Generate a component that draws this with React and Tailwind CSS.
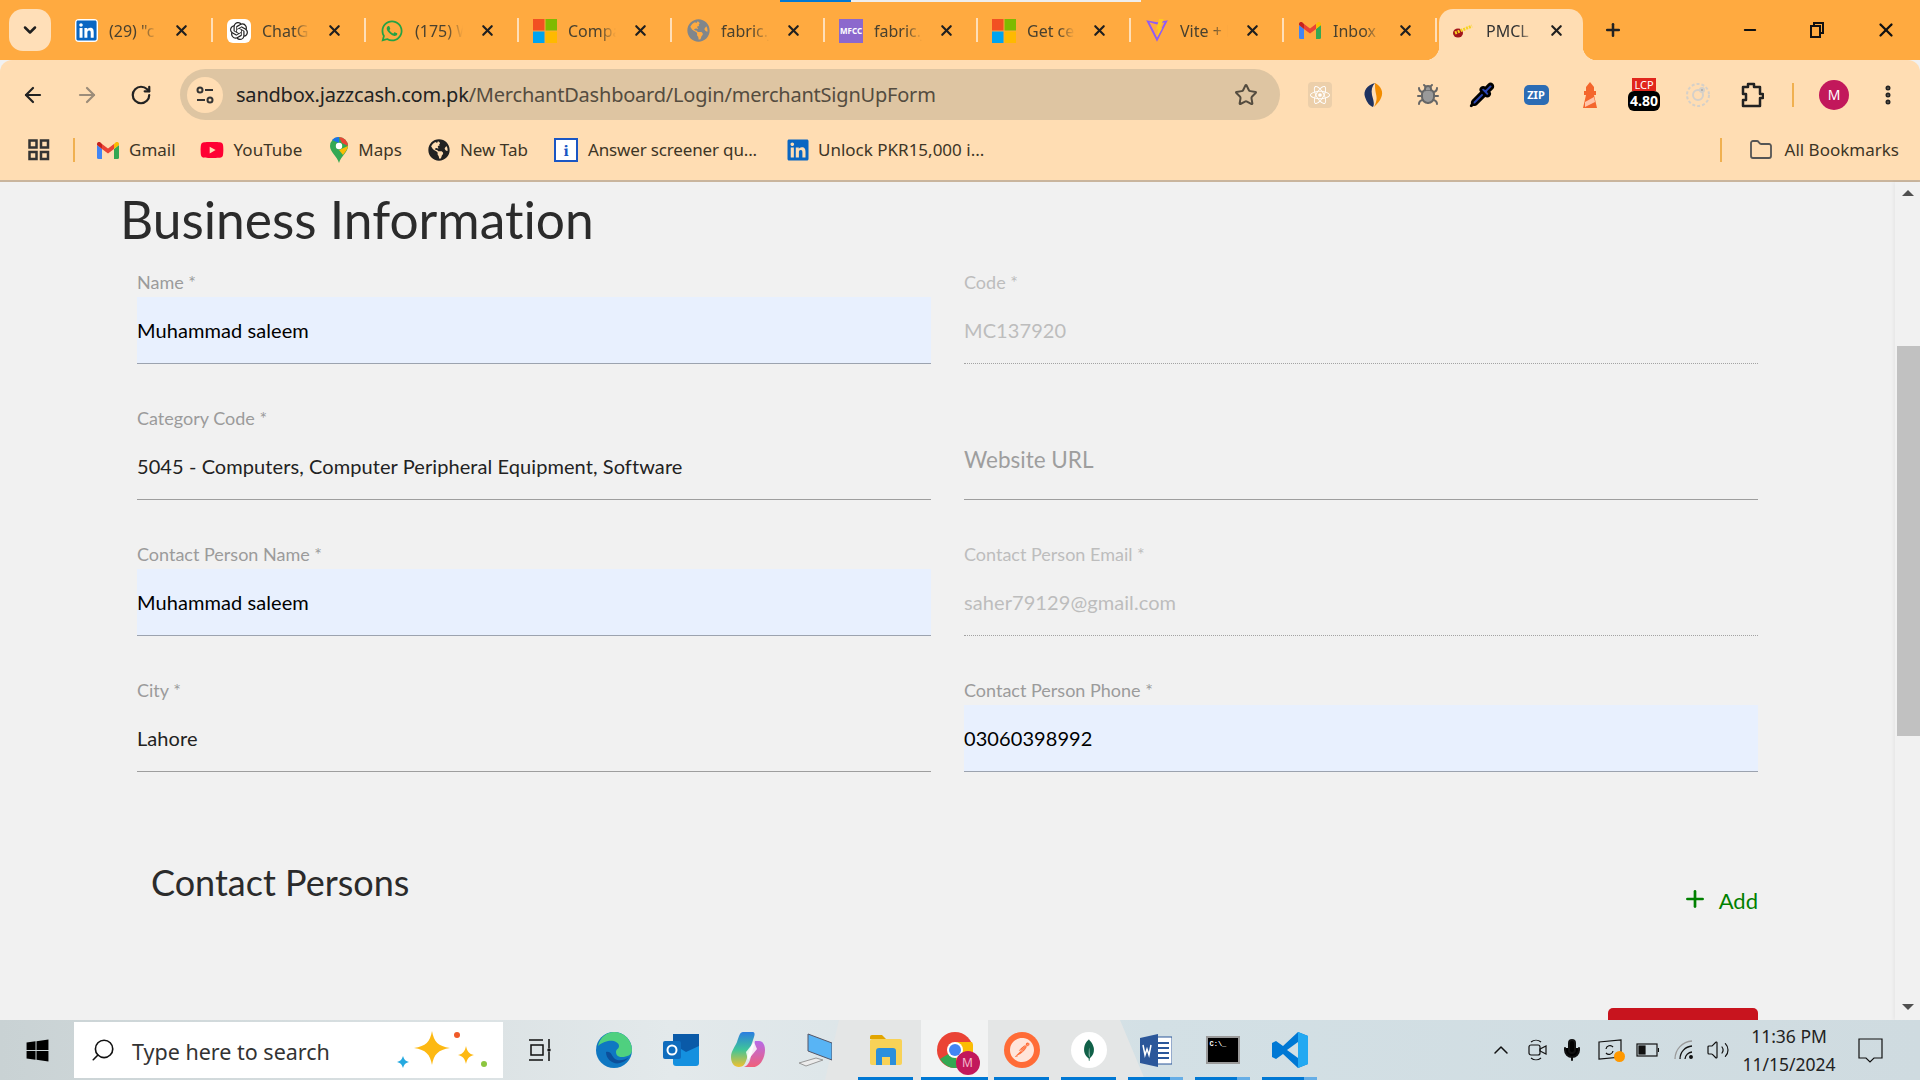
import React from 'react';
import { ArrowLeft, ArrowRight, RotateCw, Star, X, Plus, Minus, ChevronDown, ChevronUp, Search, Folder, EllipsisVertical, Mic, Volume2, Pipette, Bug } from 'lucide-react';
import { FaLinkedin, FaWhatsapp, FaGlobeAmericas, FaYoutube, FaWindows } from 'react-icons/fa';
import { SiOpenai, SiPostman, SiMongodb, SiReact } from 'react-icons/si';

const Ms = ({ size = 24 }) => (
  <svg width={size} height={size} viewBox="0 0 24 24">
    <rect x="0" y="0" width="11.5" height="11.5" fill="#f25022" />
    <rect x="12.5" y="0" width="11.5" height="11.5" fill="#7fba00" />
    <rect x="0" y="12.5" width="11.5" height="11.5" fill="#00a4ef" />
    <rect x="12.5" y="12.5" width="11.5" height="11.5" fill="#ffb900" />
  </svg>
);

const GmailIcon = () => (
  <svg width="22" height="17" viewBox="0 0 22 17">
    <path d="M0 3v12.5A1.5 1.5 0 0 0 1.5 17H5V7z" fill="#4285f4" />
    <path d="M22 3v12.5a1.5 1.5 0 0 1-1.5 1.5H17V7z" fill="#34a853" />
    <path d="M17 2v5l5-4V2c0-2-2.300-2.600-3.500-1.600z" fill="#fbbc04" />
    <path d="M5 7V2L11 6.500 17 2v5l-6 4.500z" fill="#ea4335" />
    <path d="M0 2v1l5 4V2L3.500.4C2.300-.6 0 0 0 2z" fill="#c5221f" />
  </svg>
);

const ViteIcon = () => (
  <svg width="24" height="26" viewBox="0 0 22 24">
    <path d="M1 2l10 20L21 2l-10 2z" fill="#8f5cf6" />
    <path d="M4 4l7 14 7-14-7 2z" fill="#ffaa40" />
    <path d="M13 1l4 0-3 9 2-1-5 9 1-8-2 1z" fill="#fdc921" />
  </svg>
);

const PmclIcon = () => (
  <svg width="22" height="16" viewBox="0 0 22 16">
    <ellipse cx="6" cy="10" rx="5" ry="4.500" fill="#a3161c" />
    <path d="M3 10L20 3" stroke="#f6d21f" strokeWidth="3" strokeDasharray="2 1" />
  </svg>
);

const tabs = [
  { label: '(29) "c', icon: <FaLinkedin size={23} color="#0a66c2" className="bg-white rounded-sm" /> },
  { label: 'ChatGPT', icon: <span className="flex h-6 w-6 items-center justify-center rounded-md bg-white"><SiOpenai size={18} color="#222" /></span> },
  { label: '(175) WhatsApp', icon: <FaWhatsapp size={24} color="#25a244" /> },
  { label: 'Compare', icon: <Ms /> },
  { label: 'fabric.js', icon: <FaGlobeAmericas size={23} color="#80868b" /> },
  { label: 'fabric.js', icon: <span className="flex h-6 w-6 items-center justify-center bg-[#8c68cd] text-[8px] font-bold text-white">MFCC</span> },
  { label: 'Get certified', icon: <Ms /> },
  { label: 'Vite + React', icon: <ViteIcon /> },
  { label: 'Inbox (12)', icon: <GmailIcon /> },
];

const Tab = ({ label, icon }) => (
  <div className="relative flex h-[51px] w-[153px] shrink-0 items-center pb-[8px] pl-[15px]">
    <span className="flex w-6 justify-center">{icon}</span>
    <span className="ml-[11px] w-[48px] overflow-hidden whitespace-nowrap text-[16px] text-[#49412f] [mask-image:linear-gradient(to_right,black_65%,transparent)]">{label}</span>
    <X size={17} strokeWidth={3} className="ml-[16px] text-[#1f1f1f]" />
    <span className="absolute right-[-1px] top-[9px] h-[24px] w-[2px] bg-[#ffdfb8]" />
  </div>
);

const Field = ({ label, value, filled, disabled, placeholder }) => (
  <div className="flex h-[136px] flex-col">
    <label className={`h-[28px] text-[18px] leading-[26px] ${disabled ? 'text-[#bdbdbd]' : 'text-[#9b9b9b]'}`}>{label}</label>
    <div className={`flex h-[67px] items-center border-b-[1.5px] ${disabled ? 'border-dotted border-[#a3a3a3]' : filled ? 'border-[#9ca3af]' : 'border-[#9e9e9e]'} ${filled ? 'bg-[#e8f0fe] text-black' : 'text-[#222]'}`}>
      {placeholder ? (
        <span className="relative top-[-6px] text-[22.500px] text-[#9e9e9e]">{placeholder}</span>
      ) : (
        <span className={`text-[20px] tracking-[0.08px] ${disabled ? 'text-[#bdbdbd]' : ''}`}>{value}</span>
      )}
    </div>
  </div>
);

const Bookmark = ({ icon, label, className }) => (
  <div className={`flex items-center text-[17px] text-[#3d3526] ${className}`}>
    {icon}
    <span>{label}</span>
  </div>
);

const Ext = ({ children }) => (
  <div className="flex w-[54px] shrink-0 items-center justify-center">{children}</div>
);

const TaskIcon = ({ children, bar, partial, active, className = '' }) => (
  <div className={`relative flex h-full w-[67px] items-center justify-center ${active ? 'bg-white/50' : ''} ${className}`}>
    {children}
    {bar && (
      <span className={`absolute bottom-0 flex h-[3px] bg-[#0078d4] ${active ? 'left-0 right-0' : 'left-[6px] right-[6px]'}`}>
        {partial && <span className="ml-auto h-full w-[13px] bg-[#66aee6]" />}
      </span>
    )}
  </div>
);

export default function App() {
  return (
    <div className="flex h-screen w-screen flex-col overflow-hidden bg-[#f1f1f1] font-['Noto_Sans',sans-serif]">
      {/* tab strip */}
      <div className="relative flex h-[60px] shrink-0 items-end bg-[#ffaa40]">
        <div className="absolute left-[780px] top-0 h-[2px] w-[71px] bg-[#0078d4]" />
        <div className="absolute left-[851px] top-0 h-[2px] w-[290px] bg-[#eeeeee]" />
        <div className="mb-[9px] ml-[9px] mr-[8px] flex h-[42px] w-[42px] items-center justify-center rounded-[14px] bg-[#ffdfb8]">
          <ChevronDown size={20} strokeWidth={3} className="text-[#1f1f1f]" />
        </div>
        {tabs.map((t, i) => <Tab key={i} {...t} />)}
        <div className="relative ml-[3px] flex h-[51px] w-[144px] items-center rounded-t-[14px] bg-[#ffddb3] pb-[8px] pl-[13px]">
          <span className="absolute bottom-0 left-[-14px] h-[14px] w-[14px] bg-[radial-gradient(circle_at_0_0,transparent_14px,#ffddb3_14.5px)]" />
          <span className="absolute bottom-0 right-[-14px] h-[14px] w-[14px] bg-[radial-gradient(circle_at_100%_0,transparent_14px,#ffddb3_14.5px)]" />
          <PmclIcon />
          <span className="ml-[12px] w-[48px] overflow-hidden whitespace-nowrap text-[16px] text-[#333] [mask-image:linear-gradient(to_right,black_70%,transparent)]">PMCL Merchant</span>
          <X size={17} strokeWidth={3} className="ml-[14px] text-[#1f1f1f]" />
        </div>
        <div className="mb-[9px] ml-[20px] flex h-[42px] items-center">
          <Plus size={20} strokeWidth={3} className="text-[#222]" />
        </div>
        <div className="mb-[9px] ml-auto flex h-[42px] items-center gap-[50px] pr-[23px]">
          <Minus size={18} strokeWidth={2.500} className="text-[#111]" />
          <svg width="16" height="16" viewBox="0 0 16 16" fill="none" stroke="#111" strokeWidth="2"><rect x="2" y="4" width="9" height="11" /><path d="M5 4V1h9v10h-3" /></svg>
          <X size={22} strokeWidth={2.500} className="text-[#111]" />
        </div>
      </div>

      {/* address bar */}
      <div className="flex h-[69px] shrink-0 items-center rounded-tl-[12px] rounded-tr-[12px] bg-[#ffddb3] pl-[21px]">
        <ArrowLeft size={24} strokeWidth={2.200} className="text-[#222]" />
        <ArrowRight size={24} strokeWidth={2.200} className="ml-[30px] text-[#9c8c79]" />
        <RotateCw size={22} strokeWidth={2.400} className="ml-[31px] text-[#222]" />
        <div className="ml-[28px] flex h-[51px] w-[1100px] items-center rounded-full bg-[#dec5a2] pl-[7px] pr-[22px]">
          <span className="flex h-[36px] w-[36px] items-center justify-center rounded-full bg-[#ffddb3]">
            <svg width="20" height="20" viewBox="0 0 20 20" fill="none" stroke="#333" strokeWidth="2"><circle cx="5" cy="5" r="2.500" /><path d="M10 5h8M2 15h8" /><circle cx="15" cy="15" r="2.500" /></svg>
          </span>
          <span className="ml-[13px] whitespace-nowrap text-[20px] tracking-[-0.21px] text-[#222]">sandbox.jazzcash.com.pk<span className="text-[#544c3f]">/MerchantDashboard/Login/merchantSignUpForm</span></span>
          <Star size={24} strokeWidth={2} className="ml-auto text-[#544c3f]" />
        </div>
        <div className="ml-[13px] flex items-center">
          <Ext><span className="flex h-[26px] w-[24px] items-center justify-center rounded-sm bg-[#eccfaa]"><SiReact size={20} color="#fff" /></span></Ext>
          <Ext><svg width="24" height="28" viewBox="0 0 24 26"><path d="M13 1C5 3 1 9 3 15c2 6 5 9 8 10 2-3 0-8-1-12C9 8 10 4 13 1z" fill="#1e3260" /><path d="M13 1c6 3 9 9 6 15-1 3-4 6-7 9 3-6 3-9 2-13-1-4-1-8-1-11z" fill="#f28c00" /></svg></Ext>
          <Ext><Bug size={24} className="text-[#666]" fill="#999" /></Ext>
          <Ext><Pipette size={26} strokeWidth={2.500} className="text-black" fill="#2b46b5" /></Ext>
          <Ext><span className="flex h-[20px] w-[25px] items-center justify-center rounded-[5px] bg-[#2c6cb4] text-[11px] font-bold leading-none text-white">ZIP</span></Ext>
          <Ext><svg width="20" height="26" viewBox="0 0 20 26"><path d="M10 0l4 5v4h2v4h-2l3 13H3l3-13H4V9h2V5z" fill="#f4662d" /><path d="M5 20l9-5 1 5-10 5z" fill="#ffc4a8" /></svg></Ext>
          <Ext>
            <div className="flex w-[32px] flex-col items-center">
              <span className="flex h-[13px] w-[24px] items-center justify-center bg-[#e1261c] text-[11px] leading-none text-white">LCP</span>
              <span className="flex h-[20px] w-[32px] items-center justify-center rounded-[6px] bg-black text-[14px] font-bold leading-none text-white">4.80</span>
            </div>
          </Ext>
          <Ext><svg width="26" height="28" viewBox="0 0 26 26" fill="none" stroke="#d5d0c9" strokeWidth="2"><circle cx="13" cy="13" r="11" strokeDasharray="3 2" /><circle cx="13" cy="13" r="5" /><circle cx="17" cy="8" r="2" fill="#aaa" /></svg></Ext>
          <Ext><svg width="24" height="26" viewBox="0 0 24 26" fill="none" stroke="#222" strokeWidth="2.500" strokeLinejoin="round"><path d="M3 5h5V2h6v3h6v7h3v4h-3v8H3v-6h3v-6H3z" /></svg></Ext>
        </div>
        <span className="ml-[13px] h-[24px] w-[2px] bg-[#f0b050]" />
        <span className="ml-[25px] flex h-[30px] w-[30px] items-center justify-center rounded-full bg-[#c2185b] text-[14px] text-white">M</span>
        <EllipsisVertical size={24} strokeWidth={3} className="ml-[27px] text-[#222]" />
      </div>

      {/* bookmarks */}
      <div className="flex h-[53px] shrink-0 items-center border-b-2 border-[#c9b59d] bg-[#ffddb3] pb-[9px]">
        <svg width="22" height="22" viewBox="0 0 22 22" fill="none" stroke="#333" strokeWidth="2.500" className="ml-[28px]"><rect x="1.500" y="1.500" width="7" height="7" /><rect x="13" y="1.500" width="7" height="7" /><rect x="1.500" y="13" width="7" height="7" /><rect x="13" y="13" width="7" height="7" /></svg>
        <span className="ml-[23px] h-[24px] w-[2px] bg-[#f0b050]" />
        <Bookmark className="ml-[22px] gap-[10px]" icon={<GmailIcon />} label="Gmail" />
        <Bookmark className="ml-[24px] gap-[10px]" icon={<FaYoutube size={24} color="#ff0033" />} label="YouTube" />
        <Bookmark className="ml-[28px] gap-[10px]" icon={
          <svg width="18" height="26" viewBox="0 0 18 26"><path d="M9 0a9 9 0 0 1 9 9c0 6-7 10-9 17C7 19 0 15 0 9a9 9 0 0 1 9-9z" fill="#34a853" /><path d="M2 3a9 9 0 0 1 7-3v6z" fill="#1a73e8" /><path d="M9 0a9 9 0 0 1 9 9l-6-3z" fill="#ea4335" /><path d="M18 9c0 3-3 6-5 9L9 13z" fill="#fbbc04" /><circle cx="9" cy="9" r="3.200" fill="#fff" /></svg>
        } label="Maps" />
        <Bookmark className="ml-[26px] gap-[10px]" icon={<FaGlobeAmericas size={22} color="#222" />} label="New Tab" />
        <Bookmark className="ml-[26px] gap-[10px] tracking-[-0.15px]" icon={
          <span className="flex h-[24px] w-[24px] items-center justify-center border-2 border-[#1a56c4] bg-white font-serif text-[17px] font-bold leading-none text-[#1a56c4]">i</span>
        } label="Answer screener qu..." />
        <Bookmark className="ml-[29px] gap-[8px]" icon={<FaLinkedin size={24} color="#0a66c2" />} label="Unlock PKR15,000 i..." />
        <span className="ml-auto h-[24px] w-[2px] bg-[#f0b050]" />
        <Folder size={24} strokeWidth={1.800} className="ml-[27px] text-[#555]" />
        <span className="ml-[12px] mr-[21px] text-[17px] text-[#3d3526]">All Bookmarks</span>
      </div>

      {/* page */}
      <div className="flex min-h-0 flex-1 font-['Lato',sans-serif]">
        <main className="min-w-0 flex-1 overflow-hidden">
          <h1 className="ml-[120px] mt-[7px] text-[51.500px] font-normal leading-[60px] text-[#2b2b2b] [font-variant-ligatures:none]">Business Information</h1>
          <div className="mt-[20px] grid grid-cols-2 gap-x-[33px] px-[137px]">
            <Field label="Name *" value="Muhammad saleem" filled />
            <Field label="Code *" value="MC137920" disabled />
            <Field label="Category Code *" value="5045 - Computers, Computer Peripheral Equipment, Software" />
            <Field placeholder="Website URL" />
            <Field label="Contact Person Name *" value="Muhammad saleem" filled />
            <Field label="Contact Person Email *" value="saher79129@gmail.com" disabled />
            <Field label="City *" value="Lahore" />
            <Field label="Contact Person Phone *" value="03060398992" filled />
          </div>
          <div className="mt-[47px] flex items-start justify-between pl-[151px] pr-[137px]">
            <h2 className="text-[36px] leading-[44px] text-[#2b2b2b]">Contact Persons</h2>
            <div className="mt-[20px] flex items-center gap-[11px] text-[#008000]">
              <Plus size={26} strokeWidth={2.500} />
              <span className="mt-[4px] text-[22px]">Add</span>
            </div>
          </div>
          <div className="ml-auto mr-[137px] mt-[91px] h-[40px] w-[150px] rounded-t-[5px] bg-[#c8141e]" />
        </main>
        <div className="flex w-[25px] shrink-0 flex-col items-center bg-[#f1f1f1] shadow-[-2px_0_3px_rgba(0,0,0,0.04)]">
          <span className="mt-[8px] h-0 w-0 border-x-[6px] border-b-[6px] border-x-transparent border-b-[#505050]" />
          <div className="ml-[2px] mt-[150px] h-[390px] w-[23px] bg-[#c1c1c1]" />
          <span className="mb-[10px] mt-auto h-0 w-0 border-x-[6px] border-t-[6px] border-x-transparent border-t-[#505050]" />
        </div>
      </div>

      {/* taskbar */}
      <div className="relative flex h-[60px] shrink-0 items-center bg-[linear-gradient(to_right,#c9d2d4,#e3e9eb_35%,#d3e0e5_60%,#cfdbe0)]">
        <svg className="absolute bottom-0 left-[825px] top-0 h-full w-[320px]" viewBox="0 0 320 60" preserveAspectRatio="none"><polygon points="14,0 295,0 320,60 0,60" fill="#e4e6e6" /></svg>
        <div className="relative flex h-full w-[74px] items-center justify-center"><FaWindows size={25} color="#000" /></div>
        <div className="relative flex h-[56px] w-[429px] items-center bg-white pl-[16px]">
          <Search size={26} strokeWidth={1.500} className="-scale-x-100 text-[#111]" />
          <span className="relative top-[2px] ml-[16px] text-[21.500px] text-[#333]">Type here to search</span>
          <svg width="100" height="44" viewBox="0 0 100 44" className="absolute left-[316px] top-[8px]">
            <path d="M42 1c2 11 6 15 18 17-12 2-16 6-18 17-2-11-6-15-18-17 12-2 16-6 18-17z" fill="#fdb913" />
            <path d="M76 16c1 5 3 8 8 9-5 1-7 4-8 9-1-5-3-8-8-9 5-1 7-4 8-9z" fill="#fdb913" />
            <path d="M13 26c1 3 2 5 6 6-4 1-5 3-6 6-1-3-2-5-6-6 4-1 5-3 6-6z" fill="#25a9e0" />
            <circle cx="67" cy="5" r="3" fill="#f05a28" />
            <circle cx="94" cy="34" r="3" fill="#8cc63f" />
          </svg>
        </div>
        <div className="relative ml-[4px] flex h-full items-center">
          <TaskIcon className="mr-[6px]">
            <svg width="26" height="26" viewBox="0 0 26 26" fill="none" stroke="#111" strokeWidth="1.500"><path d="M1 3h14M1 23h14M3 8h12v10H3zM21 2v9M21 15v9" /><circle cx="21" cy="13" r="1" fill="#111" /></svg>
          </TaskIcon>
          <TaskIcon>
            <svg width="36" height="36" viewBox="0 0 36 36"><circle cx="18" cy="18" r="18" fill="#0f77c2" /><path d="M2 14C4 5 11 0 18 0c10 0 18 8 18 18 0 5-5 7-10 7-4 0-6-2-6-5 0-3 3-3 3-6 0-4-6-6-11-5-5 1-8 3-10 5z" fill="#4fd07f" /><path d="M10 20c0 8 8 13 14 11 3-1 6-2 9-6-5 4-11 4-14 2-4-3-3-8-9-7z" fill="#0c4f9a" /></svg>
          </TaskIcon>
          <TaskIcon>
            <svg width="36" height="32" viewBox="0 0 36 32"><rect x="10" y="0" width="26" height="32" rx="3" fill="#1490df" /><path d="M10 0h26v12L23 18 10 10z" fill="#0a5aa8" /><rect x="0" y="7" width="18" height="18" rx="2" fill="#0f6cbd" /><circle cx="9" cy="16" r="4.500" fill="none" stroke="#fff" strokeWidth="2" /></svg>
          </TaskIcon>
          <TaskIcon>
            <svg width="36" height="36" viewBox="0 0 36 36">
              <defs>
                <linearGradient id="copL" x1="0" y1="0" x2="0" y2="1"><stop offset="0" stopColor="#2a7de1" /><stop offset="0.5" stopColor="#3fc49a" /><stop offset="1" stopColor="#f2c12e" /></linearGradient>
                <linearGradient id="copR" x1="0" y1="0" x2="0" y2="1"><stop offset="0" stopColor="#b66be8" /><stop offset="1" stopColor="#f0607a" /></linearGradient>
              </defs>
              <path d="M13 0h9c3 0 3 2 2 5l-8 24c-1 3-3 6-7 6-5 0-8-4-8-10 0-6 4-10 6-15 2-6 3-10 6-10z" fill="url(#copL)" />
              <path d="M25 9h4c4 0 6 4 6 9 0 8-5 17-12 17h-9c3-1 5-4 6-7z" fill="url(#copR)" />
              <path d="M16 20l8-10 3 7-9 11z" fill="#fff" opacity="0.85" />
            </svg>
          </TaskIcon>
          <TaskIcon>
            <svg width="34" height="34" viewBox="0 0 34 34"><path d="M10 1l24 9v17L10 18z" fill="#58b4f5" stroke="#556" strokeWidth="1" /><path d="M1 30l17-5 7 2-17 6z" fill="#ececec" stroke="#999" strokeWidth="1" /></svg>
          </TaskIcon>
          <TaskIcon bar className="ml-[4px]">
            <svg width="34" height="34" viewBox="0 0 34 34"><path d="M1 4a2 2 0 0 1 2-2h10l4 4h-16z" fill="#e2a500" /><rect x="1" y="6" width="32" height="26" rx="2" fill="#f8d257" /><path d="M7 32V18a3 3 0 0 1 3-3h14a3 3 0 0 1 3 3v14h-6v-8h-8v8z" fill="#2a8fdc" /></svg>
          </TaskIcon>
          <TaskIcon bar active className="ml-[2px]">
            <div className="relative">
              <svg width="36" height="36" viewBox="0 0 36 36"><circle cx="18" cy="18" r="18" fill="#ea4335" /><path d="M18 18L3 27a18 18 0 0 0 17 9z" fill="#34a853" /><path d="M18 10h17a18 18 0 0 1-15 26z" fill="#fbbc04" /><circle cx="18" cy="18" r="8" fill="#fff" /><circle cx="18" cy="18" r="6" fill="#4285f4" /></svg>
              <span className="absolute bottom-[-7px] right-[-7px] flex h-[24px] w-[24px] items-center justify-center rounded-full bg-[#c2185b] text-[12px] text-[#f4b8cd]">M</span>
            </div>
          </TaskIcon>
          <TaskIcon bar>
            <span className="flex h-[36px] w-[36px] items-center justify-center rounded-full bg-[#ff6c37]"><SiPostman size={24} color="#ffe5da" /></span>
          </TaskIcon>
          <TaskIcon bar>
            <span className="flex h-[36px] w-[36px] items-center justify-center rounded-full bg-white"><SiMongodb size={22} color="#116149" /></span>
          </TaskIcon>
          <TaskIcon bar partial>
            <svg width="32" height="33" viewBox="0 0 32 33"><rect x="10" y="3" width="22" height="27" fill="#fff" stroke="#2b579a" strokeWidth="1" /><path d="M15 9h14M15 14h14M15 19h14M15 24h14" stroke="#2b579a" strokeWidth="2" /><path d="M0 4l18-4v33L0 29z" fill="#2b579a" /><path d="M3 11l2 10 2-6 2 6 2-10" fill="none" stroke="#fff" strokeWidth="1.500" /></svg>
          </TaskIcon>
          <TaskIcon bar partial>
            <span className="flex h-[28px] w-[34px] flex-col border-2 border-[#9a9a9a] bg-black pl-[2px] pt-[3px] font-mono text-[7px] font-bold leading-none text-white">C:\_</span>
          </TaskIcon>
          <TaskIcon bar partial>
            <svg width="36" height="36" viewBox="0 0 36 36"><path d="M26 0l10 4v28l-10 4-15-14-7 5-4-2V11l4-2 7 5z" fill="#0078d4" /><path d="M26 0l10 4v28l-10 4z" fill="#23a9f2" /><path d="M26 10L15 18l11 8z" fill="#d3e0e5" /></svg>
          </TaskIcon>
        </div>
        <div className="relative ml-auto flex h-full items-center text-[#111]">
          <ChevronUp size={24} strokeWidth={1.500} />
          <svg width="20" height="24" viewBox="0 0 20 24" fill="none" stroke="#111" strokeWidth="1.200" className="ml-[15px]"><rect x="1" y="7" width="11" height="10" rx="2" /><path d="M12 11l6-3v8l-6-3zM3 4a8 8 0 0 1 10 0M3 20a8 8 0 0 0 10 0" /></svg>
          <Mic size={24} strokeWidth={2} fill="#000" className="ml-[12px]" />
          <div className="relative ml-[14px]">
            <svg width="24" height="22" viewBox="0 0 24 22" fill="none" stroke="#111" strokeWidth="1.200"><path d="M1 3l22-2v17L1 20z" /><path d="M8 10a4 4 0 0 1 7-2M15 12a4 4 0 0 1-7 2" /></svg>
            <span className="absolute bottom-[-1px] right-[-3px] h-[11px] w-[11px] rounded-full bg-[#ff9800]" />
          </div>
          <svg width="23" height="14" viewBox="0 0 23 14" fill="none" stroke="#111" strokeWidth="1.200" className="ml-[14px]"><rect x="1" y="1" width="20" height="12" /><rect x="3" y="3" width="6" height="8" fill="#111" /><path d="M22.500 5v4" /></svg>
          <svg width="20" height="20" viewBox="0 0 20 20" fill="none" stroke="#111" strokeWidth="1.300" className="ml-[15px]"><path d="M1 19A18 18 0 0 1 18 1" stroke="#999" /><path d="M6 19A13 13 0 0 1 18 6" /><path d="M11 19a8 8 0 0 1 7-7" /><circle cx="17" cy="17" r="1.300" fill="#111" /></svg>
          <Volume2 size={24} strokeWidth={1.200} className="ml-[12px]" />
          <div className="ml-[11px] flex w-[96px] flex-col items-center text-[17.500px] leading-[28px] text-[#222]">
            <span>11:36 PM</span>
            <span>11/15/2024</span>
          </div>
          <svg width="25" height="25" viewBox="0 0 25 25" fill="none" stroke="#111" strokeWidth="1.200" className="ml-[21px] mr-[37px]"><path d="M1 1h23v19h-8l-4 4-4-4H1z" /></svg>
        </div>
      </div>
    </div>
  );
}
